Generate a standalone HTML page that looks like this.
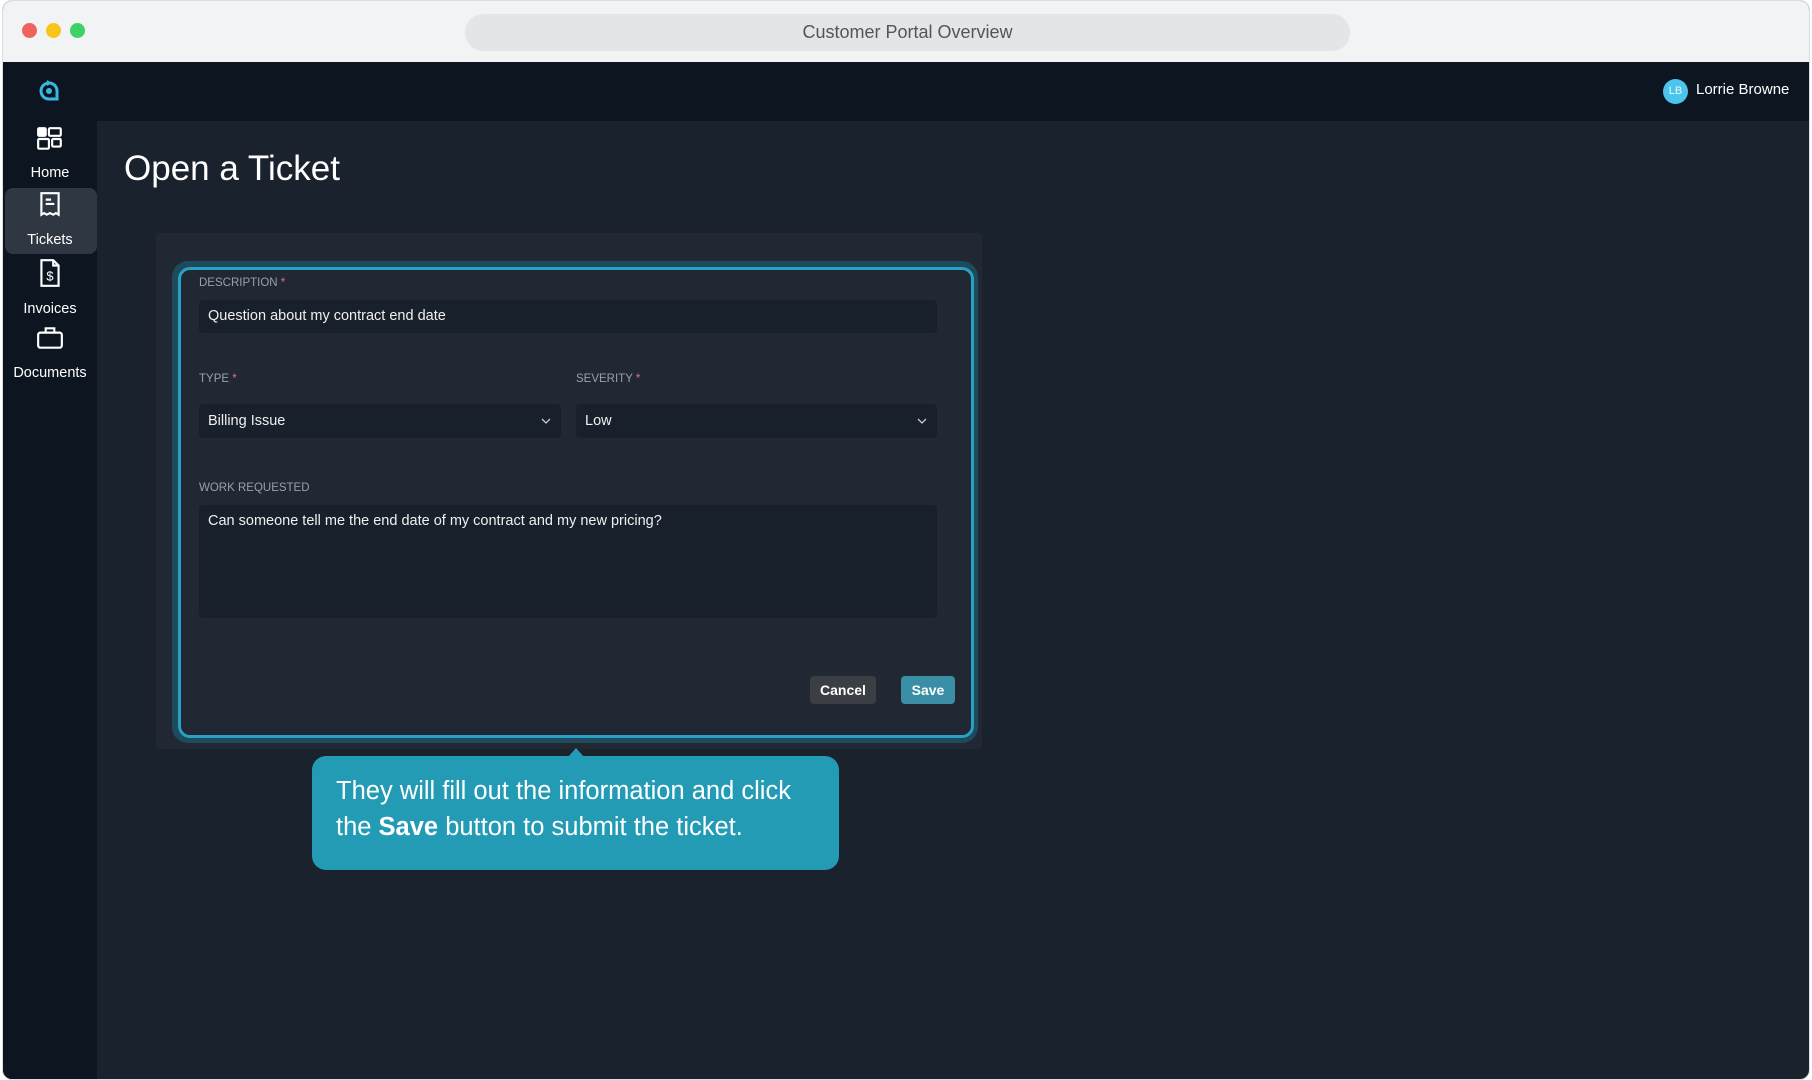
<!DOCTYPE html>
<html><head><meta charset="utf-8"><style>
*{box-sizing:border-box;margin:0;padding:0}
body{width:1812px;height:1080px;background:#fff;font-family:"Liberation Sans",sans-serif;position:relative;overflow:hidden}
.win{position:absolute;left:2px;top:0;width:1808px;height:1080px;border-radius:10px;overflow:hidden;background:#1a222d;border:1px solid #dcdde0}
.tb{position:absolute;left:0;top:0;right:0;height:61px;background:#f2f3f5}
.dot{position:absolute;top:22px;width:15px;height:15px;border-radius:50%}
.pill{position:absolute;left:462px;top:13px;width:885px;height:37px;border-radius:18px;background:#e4e5e8;text-align:center;line-height:37px;color:#555;font-size:18px}
.top{position:absolute;left:0;top:61px;right:0;height:59px;background:#0d1520}
.side{position:absolute;left:0;top:61px;width:94px;bottom:0;background:#0d1520}
.nav{position:absolute;left:0;width:94px;text-align:center;color:#fff;font-size:14.5px}
.nav svg{display:block;margin:0 auto 13px}
.act{position:absolute;left:2px;top:126px;width:92px;height:66px;background:#2f3742;border-radius:8px}
h1{position:absolute;left:121px;top:148px;font-weight:normal;color:#fff;font-size:35px}
.panel{position:absolute;left:153px;top:232px;width:826px;height:516px;background:#212833;border-radius:4px}
.glow{position:absolute;left:169px;top:260px;width:806px;height:482px;border-radius:16px;background:#1d4b5c}
.box{position:absolute;left:175px;top:266px;width:796px;height:471px;border-radius:12px;border:3px solid #27a2c4;background:#212833}
.lbl{position:absolute;color:#9aa0a8;font-size:11.5px}
.lbl b{color:#e0707c;font-weight:normal}
.inp{position:absolute;background:#18202b;border-radius:4px;color:#f0f0f0;font-size:14.5px;padding-left:9px}
.chev{position:absolute;right:10px;top:12px}
.btn{position:absolute;top:675px;height:28px;border-radius:4px;color:#fff;font-weight:bold;font-size:14px;text-align:center;line-height:28px}
.tip{position:absolute;left:309px;top:755px;width:527px;height:114px;background:#239bb5;border-radius:14px;color:#fff;font-size:25.5px;line-height:36px;padding:17px 0 0 24px}
.arr{position:absolute;left:565px;top:747px;width:0;height:0;border-left:8px solid transparent;border-right:8px solid transparent;border-bottom:9px solid #239bb5}
</style></head><body>
<div class="win">
<div class="tb">
<div class="dot" style="left:19px;background:#f0625f"></div>
<div class="dot" style="left:43px;background:#f8c51c"></div>
<div class="dot" style="left:67px;background:#3dd167"></div>
<div class="pill">Customer Portal Overview</div>
</div>
<div class="top">
<div style="position:absolute;left:1660px;top:17px;width:25px;height:25px;border-radius:50%;background:#4cc5ec;color:#e8f8ff;font-size:11px;text-align:center;line-height:25px">LB</div>
<div style="position:absolute;left:1693px;top:19px;color:#fff;font-size:15px">Lorrie Browne</div>
</div>
<div class="side">
<svg style="position:absolute;left:34px;top:16px" width="24" height="24" viewBox="0 0 24 24"><path d="M20 13a8 8 0 1 0-8 8h8z" fill="none" stroke="#38b8e0" stroke-width="3"/><circle cx="12" cy="13" r="3" fill="#38b8e0"/><path d="M10 2l5 3-5 3z" fill="#38b8e0"/></svg>
<div class="act"></div>
<div class="nav" style="top:64px"><svg width="28" height="26" viewBox="0 0 26 24" fill="none" stroke="#fff" stroke-width="2"><rect x="2" y="2" width="7" height="7" rx="1" fill="#fff"/><rect x="12" y="2" width="11" height="7" rx="1"/><rect x="2" y="12" width="10" height="9" rx="1"/><rect x="15" y="12" width="8" height="7" rx="1"/></svg>Home</div>
<div class="nav" style="top:129px"><svg width="26" height="28" viewBox="0 0 24 26" fill="none" stroke="#fff" stroke-width="2"><path d="M4 2h16v20l-2.5-1.5-2.5 1.5-3-1.5-3 1.5-2.5-1.5L4 22z"/><path d="M8 8h5M8 12h8"/></svg>Tickets</div>
<div class="nav" style="top:196px"><svg width="26" height="30" viewBox="0 0 24 28" fill="none" stroke="#fff" stroke-width="2"><path d="M4 2h11l5 5v19H4z"/><path d="M15 2v5h5"/><text x="12" y="21" font-size="12" fill="#fff" stroke="none" text-anchor="middle" font-family="Liberation Sans">$</text></svg>Invoices</div>
<div class="nav" style="top:262px"><svg width="28" height="28" viewBox="0 0 26 24" fill="none" stroke="#fff" stroke-width="2"><rect x="2" y="7" width="22" height="14" rx="2"/><path d="M9 7V3h8v4"/></svg>Documents</div>
</div>
<h1>Open a Ticket</h1>
<div class="panel"></div>
<div class="glow"></div>
<div class="box"></div>
<div class="lbl" style="left:196px;top:276px">DESCRIPTION <b>*</b></div>
<div class="inp" style="left:196px;top:299px;width:738px;height:33px;line-height:33px">Question about my contract end date</div>
<div class="lbl" style="left:196px;top:372px">TYPE <b>*</b></div>
<div class="lbl" style="left:573px;top:372px">SEVERITY <b>*</b></div>
<div class="inp" style="left:196px;top:403px;width:362px;height:34px;line-height:34px">Billing Issue<svg class="chev" width="10" height="10" viewBox="0 0 10 10"><path d="M1 3l4 4 4-4" fill="none" stroke="#ccc" stroke-width="1.3"/></svg></div>
<div class="inp" style="left:573px;top:403px;width:361px;height:34px;line-height:34px">Low<svg class="chev" width="10" height="10" viewBox="0 0 10 10"><path d="M1 3l4 4 4-4" fill="none" stroke="#ccc" stroke-width="1.3"/></svg></div>
<div class="lbl" style="left:196px;top:481px">WORK REQUESTED</div>
<div class="inp" style="left:196px;top:504px;width:738px;height:113px;padding-top:7px;line-height:18px">Can someone tell me the end date of my contract and my new pricing?</div>
<div class="btn" style="left:807px;width:66px;background:#3b3e42">Cancel</div>
<div class="btn" style="left:898px;width:54px;background:#3a8fa6">Save</div>
<div class="arr"></div>
<div class="tip">They will fill out the information and click<br>the <b>Save</b> button to submit the ticket.</div>
</div>
</body></html>
